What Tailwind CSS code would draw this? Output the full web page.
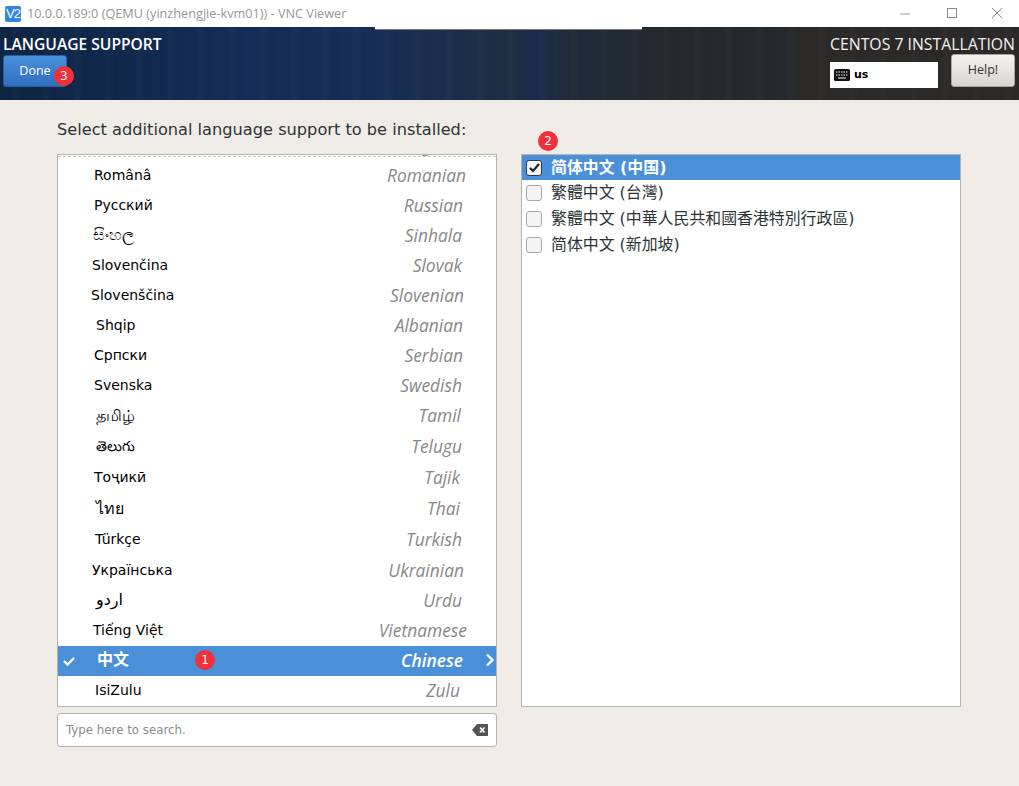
<!DOCTYPE html>
<html lang="en">
<head>
    <meta charset="UTF-8">
    <title>Language support</title>
    <script src="https://cdn.jsdelivr.net/npm/@tailwindcss/browser@4"></script>
</head>
<body class="w-[1019px] h-[786px] overflow-hidden bg-[#efece7] font-['DejaVu_Sans','Noto_Sans_CJK_SC',sans-serif] text-[14px]">
    <!-- window title bar -->
    <div class="h-[27px] bg-white flex items-center relative">
        <div class="ml-[5px] w-[16px] h-[16px] bg-[#2f86de] rounded-[2px] text-white text-[13px] tracking-[-1px] leading-[16px] text-center font-['Liberation_Sans',sans-serif]">V2</div>
        <div class="ml-[6px] text-[12.7px] text-[#969696] font-['Open_Sans',sans-serif]">10.0.0.189:0 (QEMU (yinzhengjie-kvm01)) - VNC Viewer</div>
        <div class="absolute left-[375px] top-[27px] w-[267px] h-[3px] bg-white border-b border-[#777] z-10"></div>
        <div class="ml-auto flex items-center">
            <svg width="46" height="24" viewBox="0 0 46 24"><path d="M18 12h10" stroke="#999" fill="none"/></svg>
            <svg width="46" height="24" viewBox="0 0 46 24"><rect x="19.5" y="6.5" width="9" height="9" stroke="#888" fill="none"/></svg>
            <svg width="46" height="24" viewBox="0 0 46 24" class="mr-[-1px]"><path d="M18 6l10 10M28 6L18 16" stroke="#888" fill="none"/></svg>
        </div>
    </div>

    <!-- anaconda header -->
    <div class="h-[73px] flex justify-between bg-[repeating-linear-gradient(90deg,#ffffff00_0px,#ffffff00_11px,#ffffff05_14px,#00000008_23px,#ffffff00_31px),linear-gradient(90deg,#0e2544_0%,#11294d_12%,#152c58_24%,#162e58_36%,#1a2f4d_42%,#1e2e44_50%,#1b2b4a_52.5%,#202b3a_56%,#23292e_63%,#24292c_77%,#2c2a28_79.5%,#2b2a28_100%)]">
        <div class="pl-[3px] pt-[8px]">
            <div class="text-white text-[15.6px] leading-[18px] font-semibold font-['Open_Sans',sans-serif]">LANGUAGE SUPPORT</div>
            <div class="relative mt-[2px] w-[64px] h-[32px] rounded-[3px] bg-[linear-gradient(180deg,#4a90d9,#2f6fc0)] border border-[#2a5f9e] text-white text-[12.5px] font-['Open_Sans',sans-serif] leading-[30px] text-center">
                Done
                <span class="absolute left-[50px] top-[10px] w-[20px] h-[20px] rounded-full bg-[#f0313a] text-white text-[12px] leading-[20px] text-center">3</span>
            </div>
        </div>
        <div class="pr-[4px] pt-[7px] flex flex-col items-end">
            <div class="text-[#f2f2f2] text-[15.8px] leading-[20px] font-['Open_Sans',sans-serif]">CENTOS 7 INSTALLATION</div>
            <div class="flex items-start gap-[13px]">
                <div class="mt-[8px] w-[108px] h-[26px] bg-white flex items-center pl-[4px] gap-[4px] text-[11px] font-bold text-black">
                    <svg width="16" height="12" viewBox="0 0 16 12"><rect width="16" height="12" rx="1.5" fill="#111"/><path d="M2 3h12M2 6h12" stroke="#fff" stroke-dasharray="1.5 1" fill="none"/><path d="M4 9h8" stroke="#fff" fill="none"/></svg>
                    us
                </div>
                <div class="w-[64px] h-[33px] rounded-[3px] bg-[linear-gradient(180deg,#f4f3f1,#d8d5cf)] border border-[#a9a69f] text-[#333] text-[12.5px] leading-[30px] text-center font-['Open_Sans',sans-serif]">Help!</div>
            </div>
        </div>
    </div>

    <!-- content -->
    <div class="pl-[57px] pt-[20px]">
        <div class="text-[#2e3436] text-[16.2px] leading-[20px]">Select additional language support to be installed:</div>
        <div class="flex gap-[24px] mt-[14px]">
            <div class="w-[440px]">
                <div class="h-[553px] bg-white border border-[#b7b4ae] overflow-hidden text-[14px] relative">
                    <div class="h-[2px] border-b border-dashed border-[#c8c8c8] mb-[4px]"></div>
                    <div class="absolute left-[364px] top-[0px] w-[6px] h-[1px] bg-[#999]"></div>
                    <div class="h-[30px] flex items-center justify-between pl-[36px] pr-[30px] mt-[-1px]"><span>Românâ</span><span class="italic text-[#888] text-[17.4px] font-['Open_Sans',sans-serif]">Romanian</span></div>
                    <div class="h-[30px] flex items-center justify-between pl-[36px] pr-[33px]"><span>Русский</span><span class="italic text-[#888] text-[17.4px] font-['Open_Sans',sans-serif]">Russian</span></div>
                    <div class="h-[30px] flex items-center justify-between pl-[35px] pr-[34px]"><span class="text-[16px]">සිංහල</span><span class="italic text-[#888] text-[17.4px] font-['Open_Sans',sans-serif]">Sinhala</span></div>
                    <div class="h-[30px] flex items-center justify-between pl-[34px] pr-[34px]"><span>Slovenčina</span><span class="italic text-[#888] text-[17.4px] font-['Open_Sans',sans-serif]">Slovak</span></div>
                    <div class="h-[30px] flex items-center justify-between pl-[33px] pr-[32px]"><span>Slovenščina</span><span class="italic text-[#888] text-[17.4px] font-['Open_Sans',sans-serif]">Slovenian</span></div>
                    <div class="h-[30px] flex items-center justify-between pl-[38px] pr-[33px]"><span>Shqip</span><span class="italic text-[#888] text-[17.4px] font-['Open_Sans',sans-serif]">Albanian</span></div>
                    <div class="h-[30px] flex items-center justify-between pl-[36px] pr-[33px]"><span>Српски</span><span class="italic text-[#888] text-[17.4px] font-['Open_Sans',sans-serif]">Serbian</span></div>
                    <div class="h-[30px] flex items-center justify-between pl-[36px] pr-[34px]"><span>Svenska</span><span class="italic text-[#888] text-[17.4px] font-['Open_Sans',sans-serif]">Swedish</span></div>
                    <div class="h-[31px] flex items-center justify-between pl-[38px] pr-[35px]"><span class="text-[16px] text-black">தமிழ்</span><span class="italic text-[#888] text-[17.4px] font-['Open_Sans',sans-serif]">Tamil</span></div>
                    <div class="h-[31px] flex items-center justify-between pl-[38px] pr-[34px]"><span>తెలుగు</span><span class="italic text-[#888] text-[17.4px] font-['Open_Sans',sans-serif]">Telugu</span></div>
                    <div class="h-[31px] flex items-center justify-between pl-[36px] pr-[36px]"><span>Тоҷикӣ</span><span class="italic text-[#888] text-[17.4px] font-['Open_Sans',sans-serif]">Tajik</span></div>
                    <div class="h-[31px] flex items-center justify-between pl-[38px] pr-[36px]"><span class="text-[16px]">ไทย</span><span class="italic text-[#888] text-[17.4px] font-['Open_Sans',sans-serif]">Thai</span></div>
                    <div class="h-[31px] flex items-center justify-between pl-[37px] pr-[34px]"><span>Türkçe</span><span class="italic text-[#888] text-[17.4px] font-['Open_Sans',sans-serif]">Turkish</span></div>
                    <div class="h-[30px] flex items-center justify-between pl-[34px] pr-[32px]"><span>Українська</span><span class="italic text-[#888] text-[17.4px] font-['Open_Sans',sans-serif]">Ukrainian</span></div>
                    <div class="h-[30px] flex items-center justify-between pl-[38px] pr-[34px]"><span class="text-[16px]">اردو</span><span class="italic text-[#888] text-[17.4px] font-['Open_Sans',sans-serif]">Urdu</span></div>
                    <div class="h-[31px] pb-[1px] flex items-center justify-between pl-[35px] pr-[29px]"><span>Tiếng Việt</span><span class="italic text-[#888] text-[17.4px] font-['Open_Sans',sans-serif]">Vietnamese</span></div>
                    <div class="h-[30px] pb-[2px] flex items-center justify-between pl-[39px] pr-[33px] bg-[#4a90d9] text-white font-bold relative">
                        <svg class="absolute left-[5px] top-[10px]" width="12" height="10" viewBox="0 0 12 10"><path d="M1 5l3.5 3.5L11 2" stroke="#fff" stroke-width="2.4" fill="none"/></svg>
                        <span class="text-[16px]">中文</span>
                        <span class="absolute left-[137px] top-[4px] w-[20px] h-[20px] rounded-full bg-[#f0313a] text-white text-[12px] font-normal leading-[20px] text-center">1</span>
                        <span class="italic text-[17.4px] font-semibold font-['Open_Sans',sans-serif]">Chinese</span>
                        <svg class="absolute right-[1px] top-[7px]" width="10" height="14" viewBox="0 0 10 14"><path d="M2 1.5L7.5 7 2 12.5" stroke="#fff" stroke-width="2.4" fill="none"/></svg>
                    </div>
                    <div class="h-[29px] flex items-center justify-between pl-[37px] pr-[36px]"><span>IsiZulu</span><span class="italic text-[#888] text-[17.4px] font-['Open_Sans',sans-serif]">Zulu</span></div>
                </div>
                <div class="mt-[6px] h-[34px] bg-white border border-[#b7b4ae] rounded-[3px] flex items-center justify-between pl-[8px] pr-[8px] text-[11.8px] text-[#8a8a8a]">
                    <span class="pt-[1px]">Type here to search.</span>
                    <svg width="16" height="12" viewBox="0 0 16 12"><path d="M5 0h11v12H5L0 6z" fill="#555"/><path d="M8 3.5l4.5 5M12.5 3.5L8 8.5" stroke="#fff" stroke-width="1.6" fill="none"/></svg>
                </div>
            </div>
            <div class="w-[440px] relative">
                <span class="absolute left-[17px] top-[-23px] w-[20px] h-[20px] rounded-full bg-[#f0313a] text-white text-[12px] leading-[20px] text-center">2</span>
                <div class="h-[553px] bg-white border border-[#b7b4ae] text-[15.9px]">
                    <div class="h-[25px] flex items-center bg-[#4a90d9] text-white font-bold pl-[4px] gap-[9px]">
                        <span class="w-[16px] h-[16px] rounded-[3px] bg-[#f4f4f4] border border-[#2e3a4a] flex items-center justify-center"><svg width="11" height="10" viewBox="0 0 11 10"><path d="M1 5l3 3 6-7" stroke="#222" stroke-width="2.2" fill="none"/></svg></span>
                        <span>简体中文 (中国)</span>
                    </div>
                    <div class="h-[26px] flex items-center pl-[4px] gap-[9px] text-[#2e3436]"><span class="w-[16px] h-[16px] rounded-[3px] bg-[#f4f4f4] border border-[#a8a8a8]"></span><span>繁體中文 (台灣)</span></div>
                    <div class="h-[26px] flex items-center pl-[4px] gap-[9px] text-[#2e3436]"><span class="w-[16px] h-[16px] rounded-[3px] bg-[#f4f4f4] border border-[#a8a8a8]"></span><span>繁體中文 (中華人民共和國香港特別行政區)</span></div>
                    <div class="h-[25px] flex items-center pl-[4px] gap-[9px] text-[#2e3436]"><span class="w-[16px] h-[16px] rounded-[3px] bg-[#f4f4f4] border border-[#a8a8a8]"></span><span>简体中文 (新加坡)</span></div>
                </div>
            </div>
        </div>
    </div>
</body>
</html>
